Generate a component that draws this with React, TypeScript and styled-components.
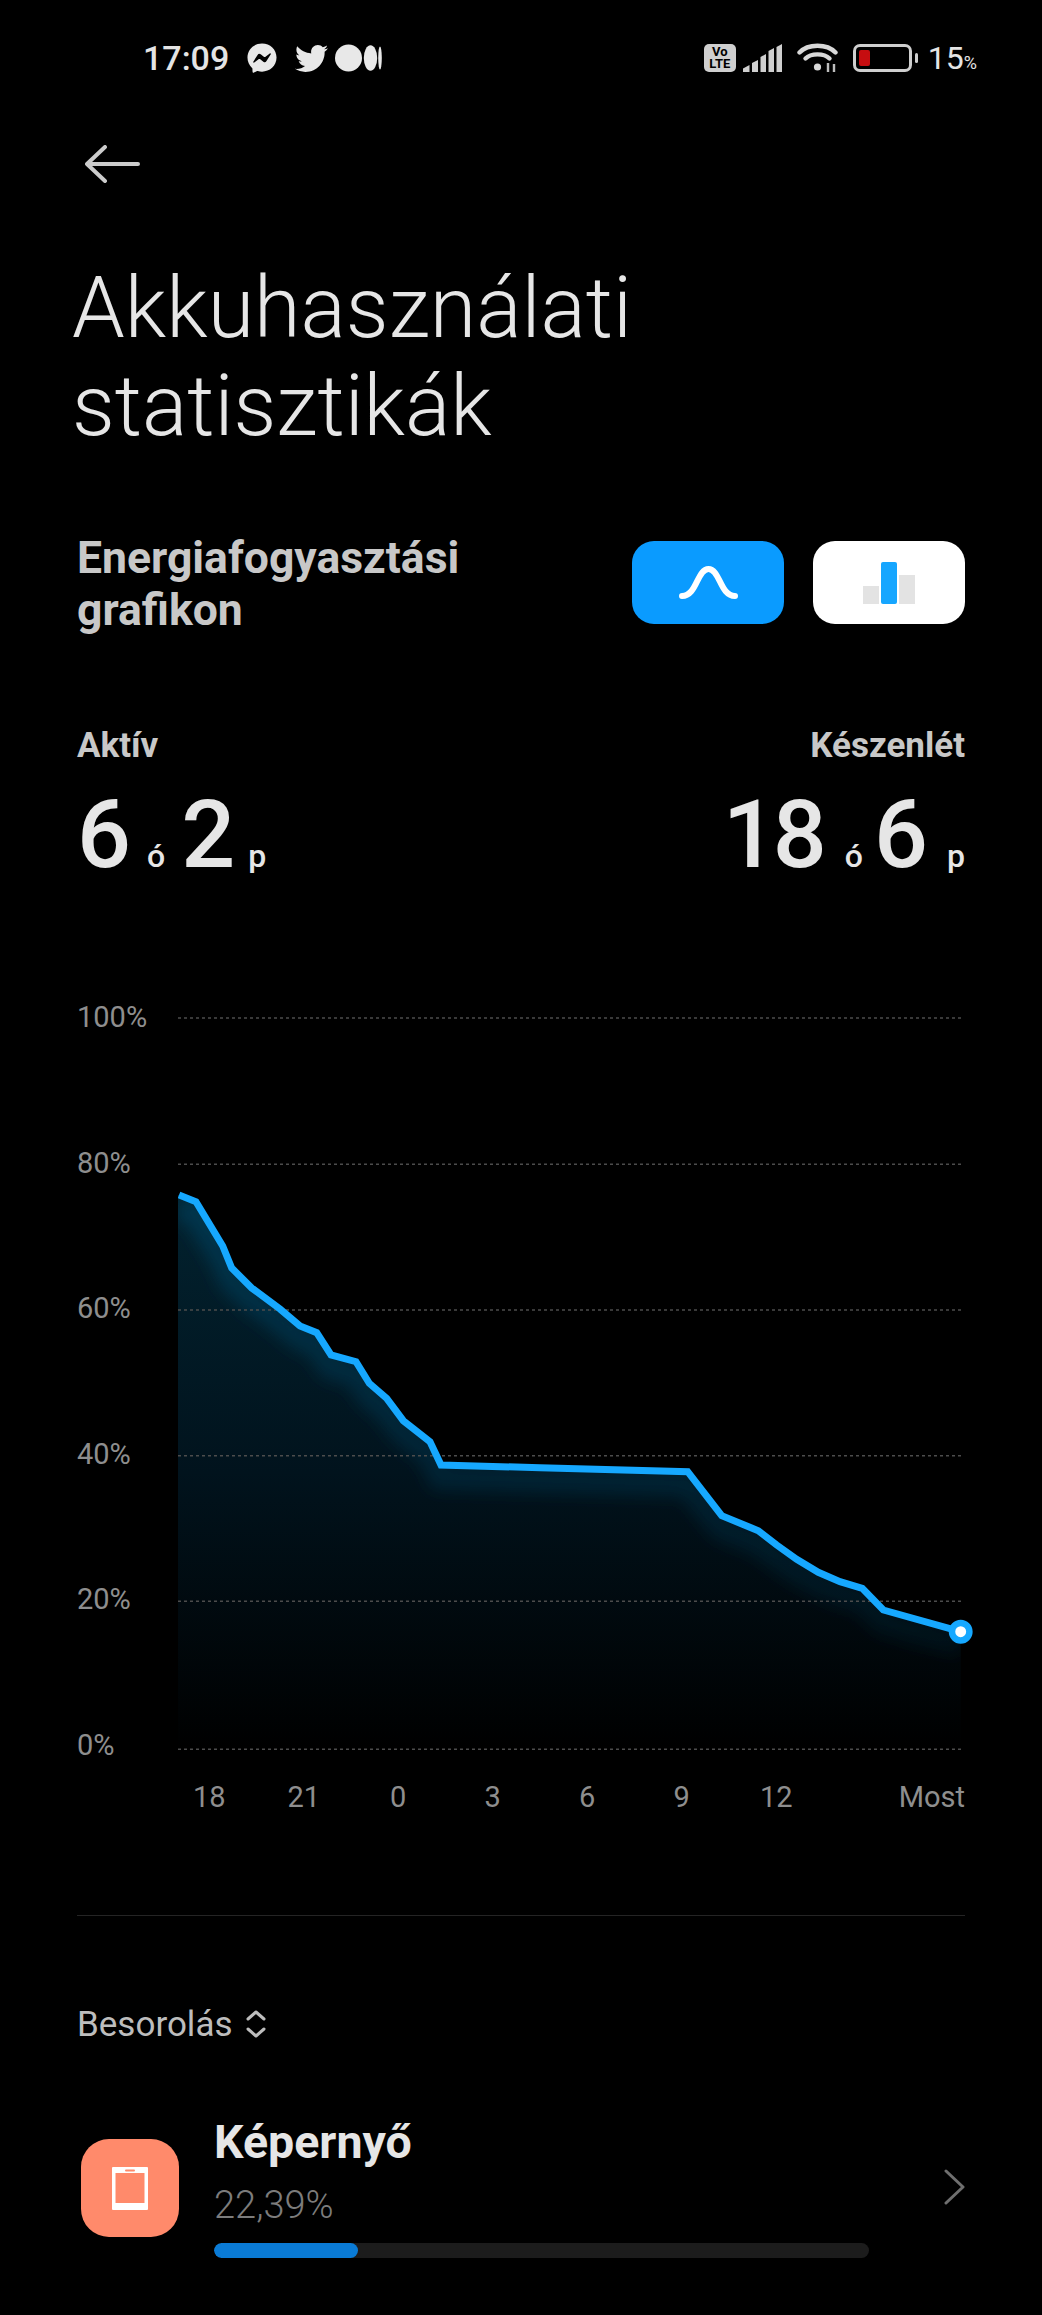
import React from 'react';
import styled, { createGlobalStyle } from 'styled-components';
import { FaFacebookMessenger, FaTwitter } from 'react-icons/fa';

const GlobalStyle = createGlobalStyle`
  html, body {
    margin: 0;
    padding: 0;
    background: #000;
  }
  body {
    font-family: Roboto, "Noto Sans", sans-serif;
  }
`;

const Page = styled.div`
  width: 1042px;
  height: 2315px;
  overflow: hidden;
  background: #000;
`;

const StatusBar = styled.div`
  height: 116px;
  padding: 0 65px 0 143px;
  display: flex;
  align-items: center;
  color: #e4e4e4;
  box-sizing: border-box;
`;

const Time = styled.span`
  font-size: 34px;
  font-weight: 500;
  width: 85px;
  white-space: nowrap;
`;

const NotifIcons = styled.div`
  display: flex;
  align-items: center;
  margin-left: 19px;
  font-size: 30px;
  color: #e8e8e8;
  svg {
    display: block;
  }
`;

const Spacer = styled.div<{ $w: number }>`
  width: ${(p) => p.$w}px;
`;

const SysIcons = styled.div`
  margin-left: auto;
  display: flex;
  align-items: center;
  svg {
    display: block;
  }
`;

const VoLte = styled.div`
  width: 32px;
  height: 28px;
  background: #cfcfcf;
  border-radius: 5px;
  color: #000;
  font-size: 13px;
  font-weight: 700;
  line-height: 12px;
  text-align: center;
  padding-top: 2px;
  box-sizing: border-box;
  span {
    display: block;
  }
`;

const Battery = styled.div`
  width: 59px;
  height: 28px;
  border: 3px solid #cfcfcf;
  border-radius: 7px;
  padding: 3px;
  box-sizing: border-box;
  margin-left: 15px;
`;

const BatteryLevel = styled.div`
  width: 11px;
  height: 100%;
  background: #c60d10;
  border-radius: 2px;
`;

const BatteryNub = styled.div`
  width: 3px;
  height: 10px;
  margin-left: 3px;
  background: #cfcfcf;
  border-radius: 2px;
`;

const Percent = styled.span`
  margin-left: 10px;
  font-size: 32px;
  font-weight: 400;
  color: #e4e4e4;
  white-space: nowrap;
  small {
    font-size: 18px;
  }
`;

const BackRow = styled.div`
  height: 96px;
  padding-left: 85px;
  display: flex;
  align-items: center;
  svg {
    display: block;
  }
`;

const Title = styled.h1`
  margin: 48px 0 0 72px;
  font-size: 84.5px;
  line-height: 98px;
  font-weight: 300;
  color: #e6e6e6;
`;

const SectionRow = styled.div`
  margin: 76px 77px 0;
  height: 104px;
  display: flex;
  align-items: center;
`;

const SectionTitle = styled.h2`
  margin: 0;
  font-size: 44.5px;
  line-height: 52px;
  font-weight: 700;
  color: #c8c8c8;
`;

const Toggle = styled.div<{ $active?: boolean }>`
  width: 152px;
  height: 83px;
  margin-bottom: 3px;
  border-radius: 22px;
  background: ${(p) => (p.$active ? '#0a9bff' : '#ffffff')};
  margin-left: ${(p) => (p.$active ? 'auto' : '29px')};
  display: flex;
  align-items: center;
  justify-content: center;
  svg {
    display: block;
  }
`;

const Stats = styled.div`
  margin: 90px 77px 0;
  display: flex;
  justify-content: space-between;
`;

const Stat = styled.div<{ $right?: boolean }>`
  display: flex;
  flex-direction: column;
  align-items: ${(p) => (p.$right ? 'flex-end' : 'flex-start')};
`;

const StatLabel = styled.div`
  font-size: 35px;
  line-height: 40px;
  font-weight: 700;
  color: #c8c8c8;
`;

const StatValue = styled.div`
  margin-top: 19px;
  height: 100px;
  display: flex;
  align-items: baseline;
  color: #e6e6e6;
`;

const Big = styled.span`
  font-size: 95px;
  line-height: 100px;
  font-weight: 500;
  letter-spacing: -4px;
`;

const Unit = styled.span<{ $l: number; $r?: number }>`
  font-size: 32px;
  font-weight: 500;
  margin-left: ${(p) => p.$l}px;
  margin-right: ${(p) => p.$r ?? 0}px;
`;

const ChartRow = styled.div`
  margin: 112px 0 0 77px;
  height: 768px;
  display: flex;
`;

const YAxis = styled.div`
  width: 101px;
  display: flex;
  flex-direction: column;
  justify-content: space-between;
`;

const AxisLabel = styled.span`
  font-size: 29px;
  line-height: 40px;
  color: #8e8e8e;
`;

const ChartSvg = styled.svg`
  display: block;
  width: 800px;
  height: 768px;
`;

const XAxis = styled.div`
  margin: 12px 77px 0;
  padding-left: 85px;
  display: flex;
  height: 40px;
  span:last-child {
    margin-left: auto;
    width: auto;
  }
`;

const XLabel = styled(AxisLabel)`
  width: 94.5px;
  text-align: center;
`;

const Divider = styled.div`
  margin: 98px 77px 0;
  height: 1px;
  background: #242424;
`;

const SortRow = styled.div`
  margin: 86px 0 0 77px;
  height: 44px;
  display: flex;
  align-items: center;
  gap: 14px;
  font-size: 35px;
  font-weight: 400;
  color: #bdbdbd;
  svg {
    display: block;
  }
`;

const UsageRow = styled.div`
  margin: 70px 77px 0 81px;
  display: flex;
  align-items: center;
`;

const AppIcon = styled.div`
  width: 98px;
  height: 98px;
  margin-top: 2px;
  border-radius: 28px;
  background: #ff8a6b;
  display: flex;
  align-items: center;
  justify-content: center;
  flex-shrink: 0;
  svg {
    display: block;
  }
`;

const UsageText = styled.div`
  margin-left: 35px;
  width: 655px;
`;

const UsageName = styled.div`
  font-size: 46.5px;
  line-height: 52px;
  font-weight: 700;
  color: #e6e6e6;
`;

const UsagePercent = styled.div`
  margin-top: 13px;
  font-size: 38px;
  line-height: 48px;
  font-weight: 300;
  color: #7c7c7c;
`;

const Track = styled.div`
  margin-top: 14px;
  height: 15px;
  border-radius: 8px;
  background: #1c1c1c;
  overflow: hidden;
`;

const Fill = styled.div<{ $pct: number }>`
  width: ${(p) => p.$pct}%;
  height: 100%;
  border-radius: 8px;
  background: #0a7bd6;
`;

const RowChevron = styled.svg`
  display: block;
  margin-left: auto;
`;

const linePoints: [number, number][] = [
  [179, 1195], [196, 1201.7], [222.7, 1246], [231.7, 1268], [251.7, 1288],
  [280, 1309], [300, 1326], [316.7, 1332.7], [331, 1355], [356, 1361.7],
  [369.3, 1383.3], [386.7, 1398.3], [403.3, 1420.7], [430, 1441.7], [441, 1465],
  [540, 1467.7], [687.7, 1471.7], [721.7, 1515.7], [758.3, 1530.7], [776.7, 1545],
  [796.7, 1559.3], [818.3, 1572.3], [840, 1581.7], [862.3, 1588.3], [883.3, 1610],
  [960.7, 1631.7],
];

const linePath = linePoints.map(([x, y]) => `${x},${y}`).join(' ');
const areaPath = `M178,1195 L${linePath} L960.7,1749 L178,1749 Z`;
const gridY = [1018, 1164.3, 1310, 1455.7, 1601.3, 1749.3];
const xLabels = ['18', '21', '0', '3', '6', '9', '12'];

const App = () => {
  return (
    <Page>
      <GlobalStyle />
      <StatusBar>
        <Time>17:09</Time>
        <NotifIcons>
          <FaFacebookMessenger size={30} />
          <Spacer $w={18} />
          <FaTwitter size={33} />
          <Spacer $w={7} />
          <svg width="47" height="28" viewBox="0 0 47 28" fill="#e8e8e8">
            <ellipse cx="13.5" cy="14" rx="13.5" ry="13.5" />
            <ellipse cx="35.5" cy="14" rx="6.7" ry="12.7" />
            <ellipse cx="45" cy="14" rx="1.8" ry="11.5" />
          </svg>
        </NotifIcons>
        <SysIcons>
          <VoLte>
            <span>Vo</span>
            <span>LTE</span>
          </VoLte>
          <Spacer $w={7} />
          <svg width="39" height="28" viewBox="0 0 39 28" fill="#cfcfcf">
            <path d="M0 28 V24.5 L6.5 21 V28 Z" />
            <path d="M9 28 V19 L15 16 V28 Z" />
            <path d="M17.5 28 V13 L23 10 V28 Z" />
            <path d="M25.5 28 V7 L31 4 V28 Z" />
            <path d="M33.5 28 V3 L39 0 V28 Z" />
          </svg>
          <Spacer $w={15} />
          <svg width="41" height="30" viewBox="0 0 41 30" fill="none" stroke="#d8d8d8" strokeWidth="4.4" strokeLinecap="round">
            <path d="M2.5 9.5 C11 0.5 30 0.5 38.5 9.5" />
            <path d="M8.5 15.5 C14 10 27 10 32.5 15.5" />
            <circle cx="20.5" cy="24" r="3.6" fill="#d8d8d8" stroke="none" />
            <path d="M31 20 V29 M37 21 V29" strokeWidth="2.4" strokeLinecap="butt" stroke="#bdbdbd" />
          </svg>
          <Battery>
            <BatteryLevel />
          </Battery>
          <BatteryNub />
          <Percent>
            15<small>%</small>
          </Percent>
        </SysIcons>
      </StatusBar>

      <BackRow>
        <svg width="55" height="38" viewBox="0 0 55 38" fill="none" stroke="#cccccc" strokeWidth="4" strokeLinecap="round" strokeLinejoin="round">
          <path d="M20 2 L2 19 L20 36 M2 19 H53" />
        </svg>
      </BackRow>

      <Title>
        Akkuhasználati
        <br />
        statisztikák
      </Title>

      <SectionRow>
        <SectionTitle>
          Energiafogyasztási
          <br />
          grafikon
        </SectionTitle>
        <Toggle $active>
          <svg width="59" height="33" viewBox="0 0 59 33" fill="none" stroke="#fff" strokeWidth="6" strokeLinecap="round">
            <path d="M3 30 C18 30 18 3 29.5 3 C41 3 41 30 56 30" />
          </svg>
        </Toggle>
        <Toggle>
          <svg width="52" height="42" viewBox="0 0 52 42">
            <rect x="0" y="24" width="16" height="18" fill="#e3e3e3" />
            <rect x="18" y="0" width="16" height="42" rx="2" fill="#16a6ff" />
            <rect x="36" y="13" width="16" height="29" fill="#e3e3e3" />
          </svg>
        </Toggle>
      </SectionRow>

      <Stats>
        <Stat>
          <StatLabel>Aktív</StatLabel>
          <StatValue>
            <Big>6</Big>
            <Unit $l={20} $r={16}>ó</Unit>
            <Big>2</Big>
            <Unit $l={17}>p</Unit>
          </StatValue>
        </Stat>
        <Stat $right>
          <StatLabel>Készenlét</StatLabel>
          <StatValue>
            <Big>18</Big>
            <Unit $l={22} $r={11}>ó</Unit>
            <Big>6</Big>
            <Unit $l={23}>p</Unit>
          </StatValue>
        </Stat>
      </Stats>

      <ChartRow>
        <YAxis>
          {['100%', '80%', '60%', '40%', '20%', '0%'].map((l) => (
            <AxisLabel key={l}>{l}</AxisLabel>
          ))}
        </YAxis>
        <ChartSvg viewBox="178 997 800 768">
          <defs>
            <linearGradient id="area" x1="0" y1="1195" x2="0" y2="1749" gradientUnits="userSpaceOnUse">
              <stop offset="0" stopColor="#02222f" />
              <stop offset="0.5" stopColor="#01131d" />
              <stop offset="1" stopColor="#000" />
            </linearGradient>
            <linearGradient id="band" x1="0" y1="1195" x2="0" y2="1640" gradientUnits="userSpaceOnUse">
              <stop offset="0" stopColor="#0a4a6c" stopOpacity="0.5" />
              <stop offset="1" stopColor="#0a4a6c" stopOpacity="0.14" />
            </linearGradient>
            <clipPath id="areaClip">
              <path d={areaPath} />
            </clipPath>
            <filter id="soft" x="-5%" y="-5%" width="110%" height="110%">
              <feGaussianBlur stdDeviation="8" />
            </filter>
          </defs>
          <path d={areaPath} fill="url(#area)" />
          <g clipPath="url(#areaClip)">
            <polyline points={linePath} transform="translate(0 12)" fill="none" stroke="url(#band)" strokeWidth="26" filter="url(#soft)" />
          </g>
          {gridY.map((y) => (
            <line key={y} x1="178" x2="963" y1={y} y2={y} stroke="#4c4c4c" strokeWidth="1.5" strokeDasharray="3 3" />
          ))}
          <polyline points={linePath} fill="none" stroke="#16a8ff" strokeWidth="7" strokeLinejoin="miter" />
          <circle cx="960.7" cy="1631.7" r="8.7" fill="#fff" stroke="#16a8ff" strokeWidth="6.5" />
        </ChartSvg>
      </ChartRow>

      <XAxis>
        {xLabels.map((l) => (
          <XLabel key={l}>{l}</XLabel>
        ))}
        <AxisLabel>Most</AxisLabel>
      </XAxis>

      <Divider />

      <SortRow>
        Besorolás
        <svg width="20" height="28" viewBox="0 0 20 28" fill="none" stroke="#bdbdbd" strokeWidth="3" strokeLinecap="round" strokeLinejoin="round">
          <path d="M2 9 L10 2 L18 9 M2 19 L10 26 L18 19" />
        </svg>
      </SortRow>

      <UsageRow>
        <AppIcon>
          <svg width="36" height="43" viewBox="0 0 36 43">
            <path fillRule="evenodd" fill="#fff" d="M1 0 H35 a1 1 0 0 1 1 1 V42 a1 1 0 0 1 -1 1 H1 a1 1 0 0 1 -1 -1 V1 a1 1 0 0 1 1 -1 Z M3.5 6 V36 H32.5 V6 Z" />
            <rect x="13" y="2.5" width="10" height="2" rx="1" fill="#ff8a6b" />
          </svg>
        </AppIcon>
        <UsageText>
          <UsageName>Képernyő</UsageName>
          <UsagePercent>22,39%</UsagePercent>
          <Track>
            <Fill $pct={22} />
          </Track>
        </UsageText>
        <RowChevron width="21" height="36" viewBox="0 0 21 36" fill="none" stroke="#6f6f6f" strokeWidth="3" strokeLinecap="round" strokeLinejoin="round">
          <path d="M2 2 L19 18 L2 34" />
        </RowChevron>
      </UsageRow>
    </Page>
  );
};

export default App;
